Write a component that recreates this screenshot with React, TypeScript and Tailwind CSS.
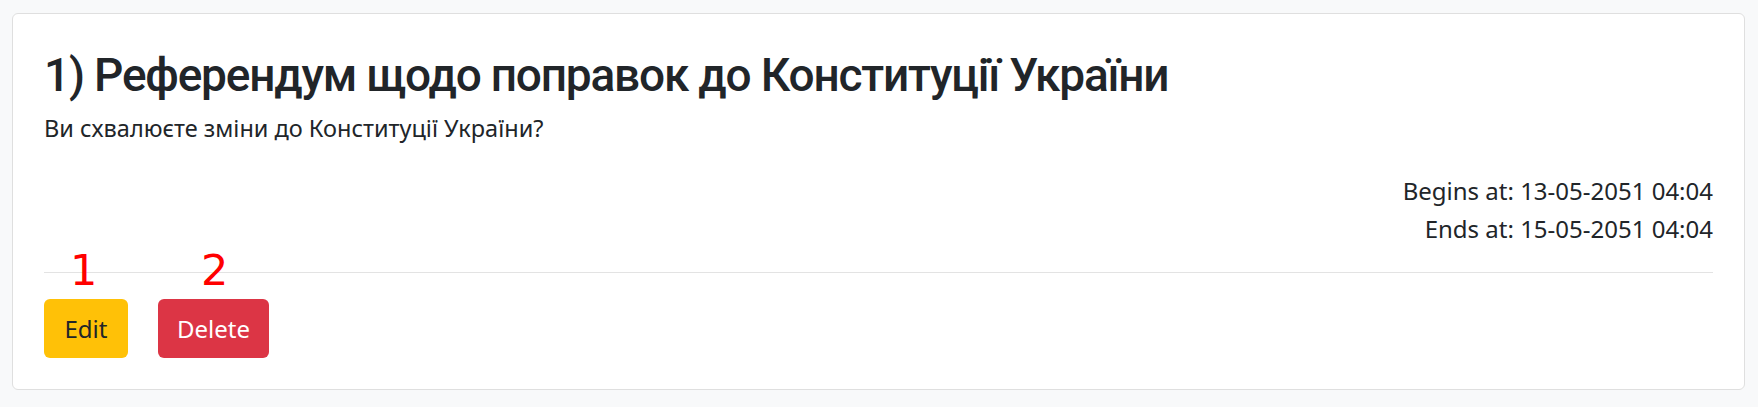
import React from "react";

export default function App() {
  return (
    <div
      className="relative min-h-screen bg-[#f8f9fa] pt-[13px] pl-[12px] pr-[13px] text-[#212529]"
      style={{ fontFamily: '"Noto Sans", "Open Sans", sans-serif' }}
    >
      <div className="rounded-[6px] border border-[#dfdfdf] bg-white px-[31px] pt-[32px] pb-[31px]">
        <h2
          className="text-[46px] leading-[58px] font-medium tracking-[-1.2px]"
          style={{ fontFamily: 'Roboto, "Noto Sans", sans-serif' }}
        >
          1) Референдум щодо поправок до Конституції України
        </h2>
        <p className="mt-[6px] text-[23.5px] leading-[36px]">
          Ви схвалюєте зміни до Конституції України?
        </p>
        <div className="mt-[26px] text-right text-[24px] leading-[38px]">
          <div>Begins at: 13-05-2051 04:04</div>
          <div>Ends at: 15-05-2051 04:04</div>
        </div>
        <div className="mt-[24px] border-t border-[#e3e3e3]" />
        <div className="mt-[26px] flex gap-[30px]">
          <button className="flex h-[59px] w-[84px] items-center justify-center rounded-[6px] bg-[#ffc107] text-[24px] text-[#212529]">
            Edit
          </button>
          <button className="flex h-[59px] w-[111px] items-center justify-center rounded-[6px] bg-[#dc3545] text-[24px] text-white">
            Delete
          </button>
        </div>
      </div>
      <span
        className="absolute left-[70px] top-[249px] text-[43px] leading-[43px] text-[#ff0000]"
        style={{ fontFamily: '"DejaVu Sans", sans-serif' }}
      >
        1
      </span>
      <span
        className="absolute left-[201px] top-[249px] text-[43px] leading-[43px] text-[#ff0000]"
        style={{ fontFamily: '"DejaVu Sans", sans-serif' }}
      >
        2
      </span>
    </div>
  );
}
